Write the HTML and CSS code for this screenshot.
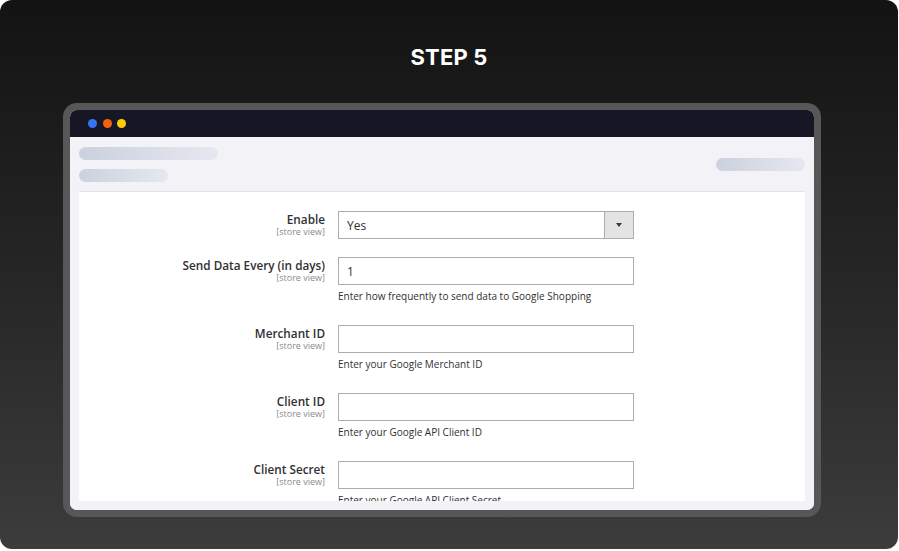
FILE: index.html
```html
<!DOCTYPE html>
<html>
<head>
<meta charset="utf-8">
<link rel="stylesheet" href="styles.css">
</head>
<body>
<div class="card">
  <h1 class="title">STEP 5</h1>
  <div class="window">
    <div class="titlebar">
      <span class="dot blue"></span>
      <span class="dot orange"></span>
      <span class="dot yellow"></span>
    </div>
    <div class="content">
      <div class="header">
        <div class="bars">
          <div class="bar wide"></div>
          <div class="bar short"></div>
        </div>
        <div class="bar short"></div>
      </div>
      <div class="panel">
        <div class="row first">
          <div class="label"><span class="name">Enable</span><span class="scope">[store view]</span></div>
          <div class="control">
            <div class="select"><span class="value">Yes</span><span class="arrow"><span class="tri"></span></span></div>
          </div>
        </div>
        <div class="row">
          <div class="label"><span class="name">Send Data Every (in days)</span><span class="scope">[store view]</span></div>
          <div class="control">
            <div class="input"><span class="value">1</span></div>
            <div class="note">Enter how frequently to send data to Google Shopping</div>
          </div>
        </div>
        <div class="row">
          <div class="label"><span class="name">Merchant ID</span><span class="scope">[store view]</span></div>
          <div class="control">
            <div class="input"></div>
            <div class="note">Enter your Google Merchant ID</div>
          </div>
        </div>
        <div class="row">
          <div class="label"><span class="name">Client ID</span><span class="scope">[store view]</span></div>
          <div class="control">
            <div class="input"></div>
            <div class="note">Enter your Google API Client ID</div>
          </div>
        </div>
        <div class="row">
          <div class="label"><span class="name">Client Secret</span><span class="scope">[store view]</span></div>
          <div class="control">
            <div class="input"></div>
            <div class="note">Enter your Google API Client Secret</div>
          </div>
        </div>
      </div>
    </div>
  </div>
</div>
</body>
</html>
```

FILE: styles.css
```css
* { box-sizing: border-box; }
html, body { margin: 0; padding: 0; background: #ffffff; }
body { font-family: "Open Sans", "Liberation Sans", sans-serif; }

.card {
  width: 898px;
  height: 549px;
  border-radius: 12px;
  background: linear-gradient(180deg, #131313 0%, #262626 50%, #3c3c3c 100%);
  overflow: hidden;
  display: flex;
  flex-direction: column;
}

.title {
  margin: 0;
  padding-top: 44px;
  height: 103px;
  text-align: center;
  font-family: Inter, "Liberation Sans", sans-serif;
  font-weight: 700;
  font-size: 22px;
  line-height: 27px;
  color: #ffffff;
  letter-spacing: 0.2px;
}

.window {
  margin-left: 63px;
  width: 758px;
  height: 414px;
  border: 7px solid #575757;
  border-radius: 14px;
  overflow: hidden;
  display: flex;
  flex-direction: column;
  background: #f2f2f7;
}

.titlebar {
  height: 27px;
  flex: none;
  background: #161625;
  display: flex;
  align-items: center;
  gap: 5.5px;
  padding-left: 18px;
}
.dot { width: 9px; height: 9px; border-radius: 50%; }
.dot.blue { background: #3a72f6; }
.dot.orange { background: #f5620c; }
.dot.yellow { background: #fecb07; }

.content {
  flex: 1;
  background: #f2f2f7;
  padding: 0 9px 9px;
  display: flex;
  flex-direction: column;
  min-height: 0;
}

.header {
  height: 54px;
  flex: none;
  display: flex;
  justify-content: space-between;
  align-items: center;
}
.bars { display: flex; flex-direction: column; gap: 9px; }
.bar {
  height: 13px;
  border-radius: 7px;
  background: linear-gradient(90deg, #cbd1dd 0%, #e6e8f0 100%);
}
.bar.wide { width: 139px; }
.bar.short { width: 89px; }

.panel {
  flex: 1;
  min-height: 0;
  overflow: hidden;
  background: #ffffff;
  border-top: 1px solid #e4e4e8;
  padding-top: 19px;
}

.row {
  display: grid;
  grid-template-columns: 246px 296px;
  column-gap: 13px;
  margin-bottom: 22px;
}
.row.first { margin-bottom: 18px; }

.label {
  text-align: right;
  display: flex;
  flex-direction: column;
  padding-top: 1px;
}
.name {
  font-weight: 600;
  font-size: 11.75px;
  line-height: 14px;
  color: #303030;
}
.scope {
  font-size: 9px;
  line-height: 11px;
  color: #8a8a8a;
}

.input, .select {
  height: 28px;
  border: 1px solid #adadad;
  background: #ffffff;
  display: flex;
  align-items: center;
}
.value {
  padding-left: 8px;
  font-size: 12px;
  color: #303030;
}
.select { justify-content: space-between; }
.arrow {
  width: 29px;
  align-self: stretch;
  background: #e3e3e3;
  border-left: 1px solid #adadad;
  display: flex;
  align-items: center;
  justify-content: center;
}
.tri {
  width: 0;
  height: 0;
  border-left: 3.5px solid transparent;
  border-right: 3.5px solid transparent;
  border-top: 4px solid #41362f;
}

.note {
  margin-top: 4px;
  font-size: 10px;
  line-height: 14px;
  color: #303030;
}
```
